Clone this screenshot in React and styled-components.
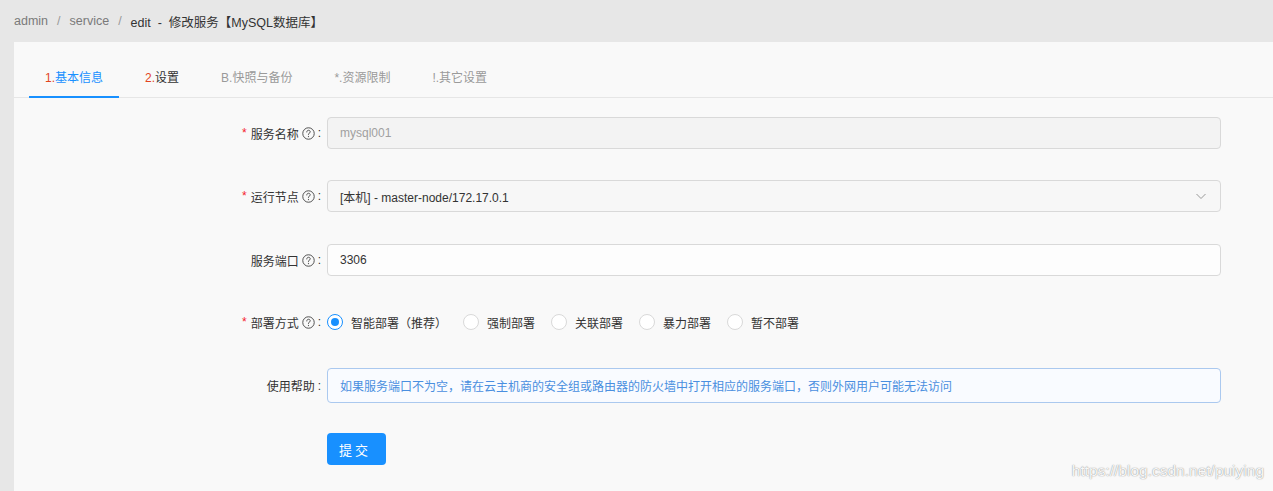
import styled, { createGlobalStyle } from "styled-components";

const GlobalStyle = createGlobalStyle`
  html, body {
    margin: 0;
    padding: 0;
    background: #e7e7e7;
    font-family: "Liberation Sans", "Noto Sans CJK SC", sans-serif;
    font-size: 12px;
    color: #333;
  }
`;

const Page = styled.div`
  position: relative;
  width: 1273px;
  height: 491px;
  overflow: hidden;
`;

const Breadcrumb = styled.div`
  height: 42px;
  padding-left: 14px;
  display: flex;
  align-items: center;
  font-size: 12.5px;
  color: #7a7a7a;
  box-sizing: border-box;

  .sep {
    margin: 0 9px;
    color: #999;
  }
  .current {
    color: #333;
  }
`;

const Card = styled.div`
  margin-left: 14px;
  background: #f9f9f9;
  height: 449px;
  padding-top: 13px;
  box-sizing: border-box;
`;

const TabBar = styled.div`
  display: flex;
  gap: 10px;
  padding-left: 15px;
  border-bottom: 1px solid #e6e6e6;
`;

const Tab = styled.div`
  padding: 14px 16px 8px;
  line-height: 19px;
  font-size: 12px;
  color: ${(p) => (p.$muted ? "#9a9a9a" : p.$active ? "#1890ff" : "#333")};
  border-bottom: 2px solid ${(p) => (p.$active ? "#1890ff" : "transparent")};
  margin-bottom: -1px;

  .num {
    color: #e2441f;
  }
`;

const Form = styled.div`
  padding-top: 19px;
`;

const Row = styled.div`
  display: grid;
  grid-template-columns: 313px 894px;
  align-items: center;
  height: ${(p) => p.$h || 32}px;
  margin-bottom: ${(p) => p.$mb ?? 31}px;
`;

const Label = styled.div`
  display: flex;
  align-items: center;
  justify-content: flex-end;
  padding-right: 5px;
  font-size: 12px;
  color: #333;
`;

const Star = styled.span`
  color: #f5222d;
  margin-right: 4px;
  font-size: 12px;
`;

const Help = styled.span`
  display: inline-flex;
  margin-left: 3px;
  color: #444;
`;

const Colon = styled.span`
  margin-left: 3px;
  margin-right: 1px;
`;

const Input = styled.div`
  height: 32px;
  box-sizing: border-box;
  border: 1px solid #d9d9d9;
  border-radius: 4px;
  background: ${(p) => (p.$disabled ? "#f3f3f3" : p.$select ? "#f7f7f7" : "#fdfdfd")};
  color: ${(p) => (p.$disabled ? "#a0a0a0" : "#333")};
  display: flex;
  align-items: center;
  justify-content: space-between;
  padding: 0 11px 0 12px;
  font-size: 12px;
`;

const Chevron = styled.svg`
  width: 12px;
  height: 12px;
  color: #999;
  margin-right: 2px;
`;

const RadioGroup = styled.div`
  display: flex;
  align-items: center;
`;

const RadioItem = styled.label`
  display: inline-flex;
  align-items: center;
  margin-right: 8px;
  font-size: 12px;
  color: #333;

  .text {
    padding: 0 8px;
  }
`;

const RadioCircle = styled.span`
  width: 16px;
  height: 16px;
  box-sizing: border-box;
  border-radius: 50%;
  border: 1px solid ${(p) => (p.$checked ? "#1890ff" : "#d9d9d9")};
  background: #fff;
  display: inline-flex;
  align-items: center;
  justify-content: center;

  &::after {
    content: "";
    display: ${(p) => (p.$checked ? "block" : "none")};
    width: 8px;
    height: 8px;
    border-radius: 50%;
    background: #1890ff;
  }
`;

const HelpBox = styled.div`
  height: 35px;
  box-sizing: border-box;
  border: 1px solid #abc9ef;
  border-radius: 4px;
  background: #f9fbff;
  color: #4a8fe0;
  display: flex;
  align-items: center;
  padding: 0 12px;
  font-size: 12px;
`;

const SubmitButton = styled.button`
  grid-column: 2;
  justify-self: start;
  width: 59px;
  height: 32px;
  border: none;
  border-radius: 4px;
  background: #1890ff;
  color: #fff;
  font-family: inherit;
  font-size: 13px;
  letter-spacing: 3px;
  padding-left: 3px;
  cursor: pointer;
`;

const Watermark = styled.div`
  position: absolute;
  right: 9px;
  bottom: 11px;
  font-size: 15.5px;
  color: rgba(255, 255, 255, 0.95);
  text-shadow: 0 0 1px rgba(0, 0, 0, 0.45), 0 0 2px rgba(0, 0, 0, 0.15);
  font-family: "Liberation Sans", sans-serif;
`;

const QuestionIcon = () => (
  <svg width="13" height="13" viewBox="0 0 12 12" fill="none">
    <circle cx="6" cy="6" r="5.3" stroke="currentColor" strokeWidth="0.85" />
    <path
      d="M4.4 4.6c0-0.95 0.72-1.6 1.6-1.6s1.6 0.6 1.6 1.45c0 0.7-0.45 1-0.95 1.3-0.4 0.25-0.65 0.5-0.65 1v0.35"
      stroke="currentColor"
      strokeWidth="0.85"
      strokeLinecap="round"
    />
    <circle cx="6" cy="8.8" r="0.55" fill="currentColor" />
  </svg>
);

const FieldLabel = ({ required, text, help }) => (
  <Label>
    {required && <Star>*</Star>}
    {text}
    {help && (
      <Help>
        <QuestionIcon />
      </Help>
    )}
    <Colon>:</Colon>
  </Label>
);

const radios = ["智能部署（推荐）", "强制部署", "关联部署", "暴力部署", "暂不部署"];

export default function App() {
  return (
    <Page>
      <GlobalStyle />
      <Breadcrumb>
        <span>admin</span>
        <span className="sep">/</span>
        <span>service</span>
        <span className="sep">/</span>
        <span className="current">edit&nbsp;&nbsp;-&nbsp;&nbsp;修改服务【MySQL数据库】</span>
      </Breadcrumb>
      <Card>
        <TabBar>
          <Tab $active>
            <span className="num">1.</span>基本信息
          </Tab>
          <Tab>
            <span className="num">2.</span>设置
          </Tab>
          <Tab $muted>B.快照与备份</Tab>
          <Tab $muted>*.资源限制</Tab>
          <Tab $muted>!.其它设置</Tab>
        </TabBar>
        <Form>
          <Row>
            <FieldLabel required help text="服务名称" />
            <Input $disabled>mysql001</Input>
          </Row>
          <Row $mb={32}>
            <FieldLabel required help text="运行节点" />
            <Input $select>
              <span>[本机] - master-node/172.17.0.1</span>
              <Chevron viewBox="0 0 12 12" fill="none">
                <path d="M1.5 4l4.5 4.5L10.5 4" stroke="currentColor" strokeWidth="1" />
              </Chevron>
            </Input>
          </Row>
          <Row $mb={30}>
            <FieldLabel help text="服务端口" />
            <Input>3306</Input>
          </Row>
          <Row $mb={30}>
            <FieldLabel required help text="部署方式" />
            <RadioGroup>
              {radios.map((r, i) => (
                <RadioItem key={r}>
                  <RadioCircle $checked={i === 0} />
                  <span className="text">{r}</span>
                </RadioItem>
              ))}
            </RadioGroup>
          </Row>
          <Row $h={35} $mb={30}>
            <FieldLabel text="使用帮助" />
            <HelpBox>
              如果服务端口不为空，请在云主机商的安全组或路由器的防火墙中打开相应的服务端口，否则外网用户可能无法访问
            </HelpBox>
          </Row>
          <Row>
            <SubmitButton>提交</SubmitButton>
          </Row>
        </Form>
      </Card>
      <Watermark>https://blog.csdn.net/puiying</Watermark>
    </Page>
  );
}
